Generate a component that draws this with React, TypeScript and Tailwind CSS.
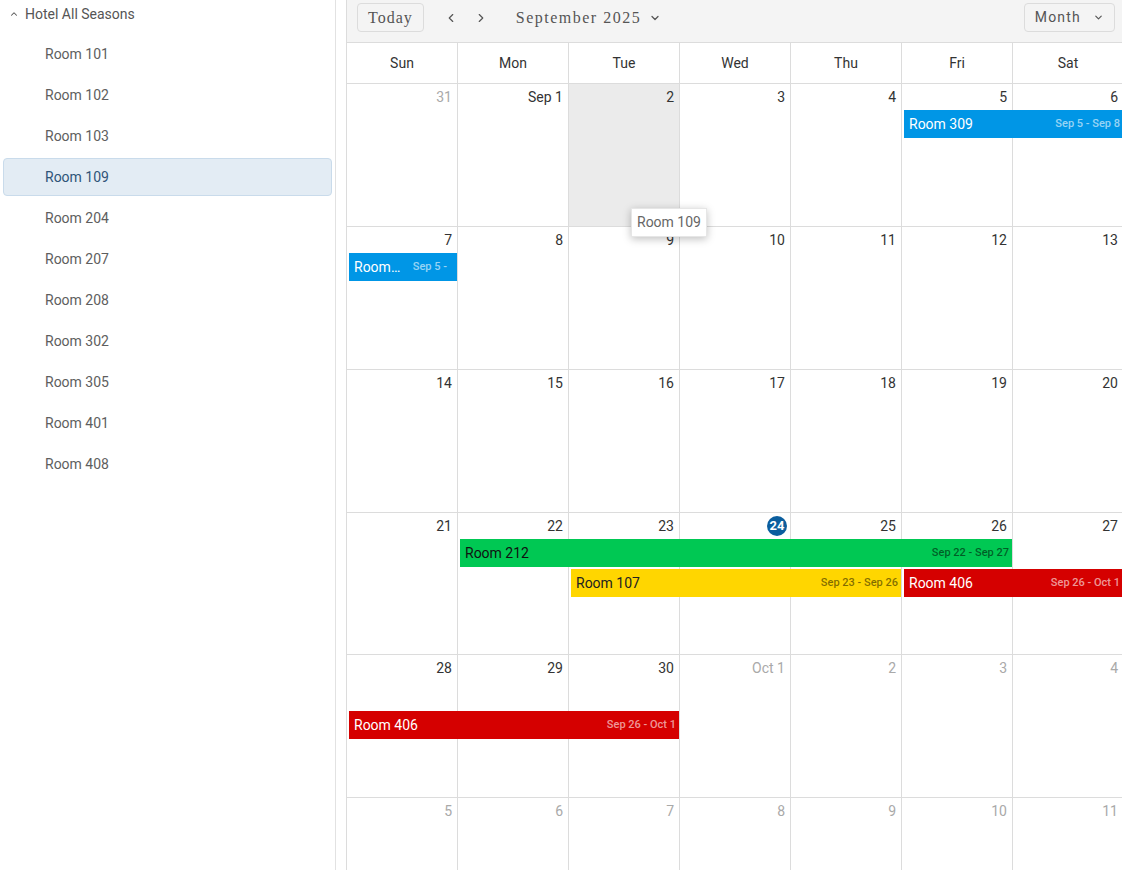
import { ChevronDown, ChevronLeft, ChevronRight, ChevronUp } from 'lucide-react';

interface CalEvent {
  title: string;
  dates: string;
  col: number;
  span: number;
  lane: number;
  tone: 'blue' | 'green' | 'yellow' | 'red';
  clipped?: boolean;
}

interface Day {
  label: string;
  other?: boolean;
  today?: boolean;
  selected?: boolean;
}

const rooms = ['Room 101', 'Room 102', 'Room 103', 'Room 109', 'Room 204', 'Room 207', 'Room 208', 'Room 302', 'Room 305', 'Room 401', 'Room 408'];

const dayNames = ['Sun', 'Mon', 'Tue', 'Wed', 'Thu', 'Fri', 'Sat'];

const nums = (from: number, to: number, other = false): Day[] => {
  const out: Day[] = [];
  for (let i = from; i <= to; i++) out.push({ label: String(i), other });
  return out;
};

const weeks: { days: Day[]; events: CalEvent[] }[] = [
  {
    days: [{ label: '31', other: true }, { label: 'Sep 1' }, { label: '2', selected: true }, ...nums(3, 6)],
    events: [{ title: 'Room 309', dates: 'Sep 5 - Sep 8', col: 6, span: 2, lane: 0, tone: 'blue' }],
  },
  {
    days: nums(7, 13),
    events: [{ title: 'Room 309', dates: 'Sep 5 -', col: 1, span: 1, lane: 0, tone: 'blue', clipped: true }],
  },
  { days: nums(14, 20), events: [] },
  {
    days: nums(21, 27).map((d) => (d.label === '24' ? { ...d, today: true } : d)),
    events: [
      { title: 'Room 212', dates: 'Sep 22 - Sep 27', col: 2, span: 5, lane: 0, tone: 'green' },
      { title: 'Room 107', dates: 'Sep 23 - Sep 26', col: 3, span: 3, lane: 1, tone: 'yellow' },
      { title: 'Room 406', dates: 'Sep 26 - Oct 1', col: 6, span: 2, lane: 1, tone: 'red' },
    ],
  },
  {
    days: [...nums(28, 30), { label: 'Oct 1', other: true }, ...nums(2, 4, true)],
    events: [{ title: 'Room 406', dates: 'Sep 26 - Oct 1', col: 1, span: 3, lane: 1, tone: 'red' }],
  },
  { days: nums(5, 11, true), events: [] },
];

const toneClass = {
  blue: 'bg-[#0096e6] text-white',
  green: 'bg-[#00c853] text-[#111]',
  yellow: 'bg-[#ffd600] text-[#222]',
  red: 'bg-[#d50000] text-white',
};

const dateClass = {
  blue: 'text-white/60',
  green: 'text-black/55',
  yellow: 'text-black/50',
  red: 'text-white/60',
};

export default function App() {
  return (
    <div className="relative flex h-[870px] w-[1122px] overflow-hidden bg-white font-['Roboto',sans-serif]">
      {/* Resource tree */}
      <aside className="w-[336px] shrink-0 border-r border-[#e2e2e2] bg-white">
        <div className="flex h-[28px] items-center gap-[6px] pl-[9px] text-[14px] text-[#555]">
          <ChevronUp className="h-[10px] w-[10px]" strokeWidth={2.5} />
          <span>Hotel All Seasons</span>
        </div>
        <ul className="pt-[7px]">
          {rooms.map((room) => {
            const active = room === 'Room 109';
            return (
              <li
                key={room}
                className={`mx-[3px] mb-[3px] flex h-[38px] items-center rounded-[4px] border pl-[41px] text-[14px] ${
                  active ? 'border-[#c9dbeb] bg-[#e3ecf4] text-[#2f5478]' : 'border-transparent text-[#5e5e5e]'
                }`}
              >
                {room}
              </li>
            );
          })}
        </ul>
      </aside>

      <div className="w-[10px] shrink-0" />

      {/* Scheduler */}
      <section className="w-[777px] shrink-0">
        <div className="flex h-[42px] items-start border-l border-[#dcdcdc] bg-[#f4f4f4] pl-[10px] pr-[8px] pt-[3px] font-['Liberation_Serif',serif] text-[16px] tracking-[1px] text-[#555]">
          <button className="h-[29px] rounded-[4px] border border-[#dcdcdc] px-[10px]">Today</button>
          <div className="ml-[20px] flex h-[29px] items-center gap-[16px] text-[#555]">
            <ChevronLeft className="h-[14px] w-[14px]" strokeWidth={2} />
            <ChevronRight className="h-[14px] w-[14px]" strokeWidth={2} />
          </div>
          <div className="ml-[28px] flex h-[29px] items-center gap-[8px]">
            <span className="tracking-[1.5px]">September 2025</span>
            <ChevronDown className="h-[12px] w-[12px]" strokeWidth={2.5} />
          </div>
          <button className="ml-auto flex h-[29px] w-[91px] items-center justify-end gap-[12px] rounded-[4px] border border-[#dcdcdc] pr-[10px] font-['Roboto',sans-serif] text-[14px] tracking-[1.2px]">
            Month
            <ChevronDown className="h-[11px] w-[11px]" strokeWidth={2.5} />
          </button>
        </div>

        <div className="grid h-[41px] grid-cols-[repeat(7,111px)] border-t border-[#dcdcdc] text-[14px] text-[#333]">
          {dayNames.map((d) => (
            <div key={d} className="flex items-center justify-center border-l border-[#dcdcdc]">
              {d}
            </div>
          ))}
        </div>

        {weeks.map((week, wi) => (
          <div key={wi} className={`relative border-t border-[#dcdcdc] ${wi === 3 ? 'h-[142px]' : 'h-[143px]'}`}>
            <div className="grid h-full grid-cols-[repeat(7,111px)]">
              {week.days.map((day, di) => (
                <div
                  key={di}
                  className={`flex justify-end border-l border-[#dcdcdc] pr-[5px] pt-[3px] text-[14px] ${
                    day.selected ? 'bg-[#ebebeb]' : ''
                  } ${day.other ? 'text-[#a9a9a9]' : 'text-[#333]'}`}
                >
                  {day.today ? (
                    <span className="-mr-[2px] flex h-[20px] w-[20px] items-center justify-center rounded-full bg-[#0b5e9e] text-[13px] font-bold text-white">
                      {day.label}
                    </span>
                  ) : (
                    <span className="leading-[20px]">{day.label}</span>
                  )}
                </div>
              ))}
            </div>
            {week.events.length > 0 && (
              <div className="pointer-events-none absolute left-0 top-[26px] grid w-full grid-cols-[repeat(7,111px)] grid-rows-[28px_28px] gap-y-[2px]">
                {week.events.map((ev) => (
                  <div
                    key={ev.title + ev.col}
                    className={`ml-[3px] flex min-w-0 items-center overflow-hidden pl-[5px] ${
                      ev.clipped ? 'gap-[10px] pr-[10px]' : 'gap-[8px] pr-[3px]'
                    } ${toneClass[ev.tone]}`}
                    style={{ gridColumn: `${ev.col} / span ${ev.span}`, gridRow: ev.lane + 1 }}
                  >
                    <span className="min-w-0 flex-1 truncate text-[14px]">{ev.title}</span>
                    <span className={`shrink-0 whitespace-nowrap text-[11px] font-medium ${dateClass[ev.tone]}`}>{ev.dates}</span>
                  </div>
                ))}
              </div>
            )}
          </div>
        ))}
      </section>

      {/* Hover tooltip */}
      <div className="absolute left-[631px] top-[208px] flex h-[29px] items-center border border-[#e6e6e6] bg-white px-[5px] text-[14px] text-[#666] shadow-[0_2px_8px_rgba(0,0,0,0.25)]">
        Room 109
      </div>
    </div>
  );
}
